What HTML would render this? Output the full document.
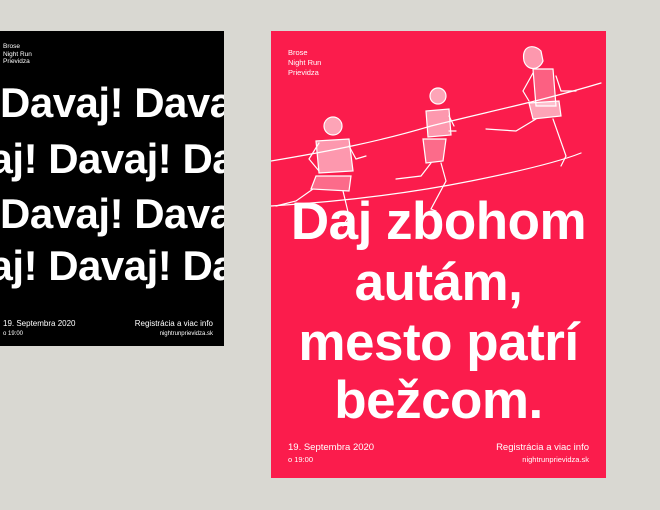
<!DOCTYPE html>
<html><head><meta charset="utf-8"><style>
html,body{margin:0;padding:0}
body{width:660px;height:510px;background:#d9d8d2;position:relative;overflow:hidden;font-family:"Liberation Sans",sans-serif}
.p{position:absolute;overflow:hidden}
#b{left:0;top:31px;width:224px;height:315px;background:#000;color:#fff}
#r{left:271px;top:31px;width:335px;height:447px;background:#fb1c4c;color:#fff}
.sm{position:absolute;font-size:7px;line-height:8px}
.row{position:absolute;white-space:nowrap;font-weight:bold;font-size:42px;letter-spacing:-0.5px;line-height:42px}
.h{position:absolute;left:0;width:335px;text-align:center;font-weight:bold;font-size:53px;line-height:58px;letter-spacing:-0.5px}
</style></head><body>
<div class="p" id="b">
 <div class="sm" style="left:3px;top:12px;font-size:6.5px;line-height:7.5px">Brose<br>Night Run<br>Prievidza</div>
 <div class="row" style="left:0px;top:51px">Davaj! Davaj! Davaj!</div>
 <div class="row" style="left:-86px;top:107px">Davaj! Davaj! Davaj!</div>
 <div class="row" style="left:0px;top:162px">Davaj! Davaj! Davaj!</div>
 <div class="row" style="left:-86px;top:214px">Davaj! Davaj! Davaj!</div>
 <div class="sm" style="left:3px;top:288px;font-size:8px;line-height:9px">19. Septembra 2020<br><span style="font-size:6px">o 19:00</span></div>
 <div class="sm" style="right:11px;top:288px;text-align:right;font-size:8px;line-height:9px">Registrácia a viac info<br><span style="font-size:6px">nightrunprievidza.sk</span></div>
</div>
<div class="p" id="r">
 <svg width="335" height="447" style="position:absolute;left:0;top:0" fill="none" stroke="#fff" stroke-width="1.2" stroke-linecap="round">
  <path d="M0 130 C60 120 110 110 160 95 C220 80 270 70 330 52"/>
  <path d="M0 175 C80 170 150 160 200 150 C250 140 290 130 310 122"/>
  <circle cx="62" cy="95" r="9" fill="#fff" fill-opacity=".6"/>
  <path d="M45 110 L78 108 L82 140 L48 142 Z" fill="#fff" fill-opacity=".55"/>
  <path d="M48 112 L38 128 L48 140 M78 115 L85 128 L95 125"/>
  <path d="M45 145 L80 145 L78 160 L40 158 Z" fill="#fff" fill-opacity=".35"/>
  <path d="M42 158 L25 170 L5 175 M72 160 L78 185 L72 195"/>
  <circle cx="167" cy="65" r="8" fill="#fff" fill-opacity=".6"/>
  <path d="M155 80 L178 78 L180 104 L157 106 Z" fill="#fff" fill-opacity=".55"/>
  <path d="M152 108 L175 108 L172 130 L155 132 Z" fill="#fff" fill-opacity=".35"/>
  <path d="M160 132 L150 145 L125 148 M170 132 L175 150 L160 178 L165 180"/>
  <path d="M178 85 L183 95 M178 100 L185 100"/>
  <path d="M270 20 C262 12 250 15 253 30 C256 40 268 40 272 30 Z" fill="#fff" fill-opacity=".55"/>
  <path d="M262 38 L282 38 L285 75 L265 75 Z" fill="#fff" fill-opacity=".3"/>
  <path d="M258 72 L288 70 L290 85 L262 88 Z" fill="#fff" fill-opacity=".6"/>
  <path d="M265 88 L245 100 L215 98 M282 88 L295 125 L290 135"/>
  <path d="M262 42 L252 60 L258 70 M285 45 L290 60 L305 60"/>
 </svg>
 <div class="sm" style="left:17px;top:17px;font-size:7.5px;line-height:10px">Brose<br>Night Run<br>Prievidza</div>
 <div class="h" style="top:162px">Daj zbohom</div>
 <div class="h" style="top:223px">autám,</div>
 <div class="h" style="top:283px">mesto patrí</div>
 <div class="h" style="top:341px">bežcom.</div>
 <div class="sm" style="left:17px;top:411px;font-size:9.5px;line-height:12px">19. Septembra 2020<br><span style="font-size:7.5px">o 19:00</span></div>
 <div class="sm" style="right:17px;top:411px;text-align:right;font-size:9.5px;line-height:12px">Registrácia a viac info<br><span style="font-size:7.5px">nightrunprievidza.sk</span></div>
</div>
</body></html>
